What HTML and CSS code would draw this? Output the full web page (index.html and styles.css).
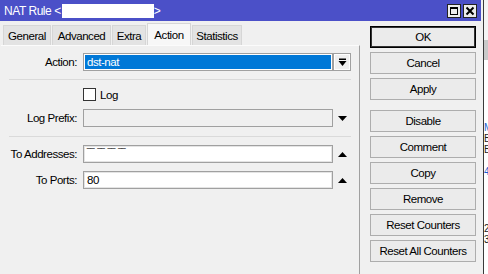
FILE: index.html
```html
<!DOCTYPE html>
<html>
<head>
<meta charset="utf-8">
<link rel="stylesheet" href="styles.css">
</head>
<body>
<div class="screen">
  <div class="window">
    <div class="titlebar">
      <span class="title">NAT Rule &lt;</span><span class="redact"></span><span class="title">&gt;</span>
      <div class="tbtns">
        <span class="tbtn"><svg width="12" height="12" viewBox="0 0 12 12"><rect x="2.5" y="2.5" width="7" height="7" fill="none" stroke="#000" stroke-width="1"/><rect x="2" y="2" width="8" height="2" fill="#000"/></svg></span>
        <span class="tbtn"><svg width="12" height="12" viewBox="0 0 12 12"><path d="M2.5 2.5 L9.5 9.5 M9.5 2.5 L2.5 9.5" stroke="#000" stroke-width="2" fill="none"/></svg></span>
      </div>
    </div>
    <div class="main">
      <div class="left">
        <div class="tabs">
          <div class="tab w-general">General</div>
          <div class="tab w-advanced">Advanced</div>
          <div class="tab w-extra">Extra</div>
          <div class="tab active w-action">Action</div>
          <div class="tab w-stats">Statistics</div>
        </div>
        <div class="panel">
          <div class="row">
            <div class="label">Action:</div>
            <div class="field sel">dst-nat</div>
            <div class="aux dd"><svg width="9" height="9" viewBox="0 0 9 9"><rect x="1" y="0.5" width="7" height="1.5" fill="#000"/><polygon points="0.5,3 8.5,3 4.5,8" fill="#000"/></svg></div>
          </div>
          <div class="sep s1"></div>
          <div class="row chk">
            <span class="box"></span><span class="chklabel">Log</span>
          </div>
          <div class="row r-prefix">
            <div class="label">Log Prefix:</div>
            <div class="field disabled"></div>
            <div class="aux"><svg width="9" height="5" viewBox="0 0 9 5"><polygon points="0,0 9,0 4.5,5" fill="#000"/></svg></div>
          </div>
          <div class="sep s2"></div>
          <div class="row r-addr">
            <div class="label">To Addresses:</div>
            <div class="field addr"><span class="masked">‾‾ ‾‾ ‾‾ ‾‾</span></div>
            <div class="aux"><svg width="9" height="5" viewBox="0 0 9 5"><polygon points="0,5 9,5 4.5,0" fill="#000"/></svg></div>
          </div>
          <div class="row r-ports">
            <div class="label">To Ports:</div>
            <div class="field">80</div>
            <div class="aux"><svg width="9" height="5" viewBox="0 0 9 5"><polygon points="0,5 9,5 4.5,0" fill="#000"/></svg></div>
          </div>
        </div>
      </div>
      <div class="buttons">
        <div class="btn default">OK</div>
        <div class="btn">Cancel</div>
        <div class="btn">Apply</div>
        <div class="btn spaced">Disable</div>
        <div class="btn">Comment</div>
        <div class="btn">Copy</div>
        <div class="btn">Remove</div>
        <div class="btn">Reset Counters</div>
        <div class="btn">Reset All Counters</div>
      </div>
    </div>
  </div>
  <div class="edge"></div>
  <div class="vline"></div>
  <div class="behind">
    <div class="bh-top"></div>
    <div class="bh-scroll"></div>
    <div class="bh-gap1"></div>
    <div class="g blue">M</div>
    <div class="g">B</div>
    <div class="g">B</div>
    <div class="bh-gap2"></div>
    <div class="g blue">4</div>
    <div class="bh-gap3"></div>
    <div class="g">2</div>
    <div class="g">3</div>
  </div>
</div>
</body>
</html>
```
FILE: styles.css
```css
html, body {
  margin: 0;
  padding: 0;
}
body {
  width: 488px;
  height: 274px;
  overflow: hidden;
  background: #f0f0f0;
  font-family: "Liberation Sans", Arial, sans-serif;
  font-size: 11.5px;
  letter-spacing: -0.45px;
  color: #000;
}
.screen {
  display: flex;
  height: 274px;
}
.window {
  width: 481px;
  display: flex;
  flex-direction: column;
  background: #f0f0f0;
}
.titlebar {
  height: 21px;
  background: #4b50c8;
  display: flex;
  align-items: center;
  color: #fff;
  padding-left: 4px;
}
.title {
  white-space: pre;
  font-size: 12px;
}
.redact {
  width: 92px;
  height: 14px;
  background: #fff;
  margin-left: 1px;
}
.tbtns {
  margin-left: auto;
  margin-right: 4px;
  display: flex;
  gap: 2px;
}
.tbtn {
  width: 14px;
  height: 14px;
  box-sizing: border-box;
  border: 1px solid #222;
  background: #ececec;
  display: flex;
  align-items: center;
  justify-content: center;
}
.main {
  display: flex;
  flex: 1;
}
.left {
  width: 360px;
  padding-left: 1px;
  box-sizing: border-box;
  display: flex;
  flex-direction: column;
}
.tabs {
  height: 24px;
  display: flex;
  align-items: flex-end;
  padding-left: 2px;
}
.tab {
  height: 20px;
  box-sizing: border-box;
  background: #e3e3e3;
  border: 1px solid #d6d6d6;
  border-bottom: none;
  display: flex;
  align-items: center;
  justify-content: center;
  margin-right: 1px;
  white-space: nowrap;
}
.tab.active {
  height: 22px;
  background: #f7f7f7;
}
.w-general { width: 48px; }
.w-advanced { width: 59px; }
.w-extra { width: 34px; }
.w-action { width: 44px; }
.w-stats { width: 50px; }
.panel {
  flex: 1;
  background: #f0f0f0;
  border-top: 1px solid #fbfbfb;
  border-right: 1px solid #a0a0a0;
  padding-top: 7px;
}
.row {
  display: flex;
  align-items: center;
  height: 18px;
}
.label {
  width: 82px;
  box-sizing: border-box;
  padding-right: 6px;
  text-align: right;
  white-space: nowrap;
}
.field {
  width: 250px;
  height: 18px;
  box-sizing: border-box;
  border: 1px solid #a0a0a0;
  box-shadow: inset 0 0 0 1px #e4e4e4;
  background: #fff;
  display: flex;
  align-items: center;
  padding-left: 3px;
}
.field.sel {
  background: #0078d7;
  box-shadow: inset 0 0 0 1px #fff;
  color: #fff;
}
.field.disabled {
  background: #f0f0f0;
  box-shadow: none;
}
.field.addr {
  align-items: flex-start;
  padding-top: 2px;
}
.masked {
  line-height: 10px;
  font-size: 11px;
  letter-spacing: 0;
  color: #222;
}
.aux {
  width: 18px;
  height: 18px;
  box-sizing: border-box;
  display: flex;
  align-items: center;
  justify-content: center;
}
.dd {
  border: 1px solid #a0a0a0;
  background: #f0f0f0;
  box-shadow: inset 0 0 0 1px #fff;
}
.sep {
  height: 1px;
  background: #dadada;
  margin-left: 8px;
  width: 342px;
}
.s1 { margin-top: 8px; }
.s2 { margin-top: 9px; }
.chk {
  height: 13px;
  margin-top: 8px;
  padding-left: 82px;
}
.box {
  width: 13px;
  height: 13px;
  box-sizing: border-box;
  border: 1px solid #333;
  background: #fff;
}
.chklabel {
  margin-left: 4px;
}
.r-prefix { margin-top: 8px; }
.r-addr { margin-top: 8px; }
.r-ports { margin-top: 8px; }
.buttons {
  margin-left: 10px;
  padding-top: 5px;
  display: flex;
  flex-direction: column;
  gap: 4px;
}
.btn {
  width: 106px;
  height: 22px;
  box-sizing: border-box;
  border: 1px solid #adadad;
  background: #ebebeb;
  display: flex;
  align-items: center;
  justify-content: center;
  white-space: nowrap;
}
.btn.default {
  border: 1px solid #000;
  box-shadow: inset 0 0 0 1px #333;
}
.btn.spaced {
  margin-top: 6px;
}
.edge {
  width: 2px;
  background: #f0f0f0;
}
.vline {
  width: 1px;
  background: #3a3a3a;
}
.behind {
  width: 4px;
  background: #fff;
  overflow: hidden;
  display: flex;
  flex-direction: column;
  font-size: 10px;
  letter-spacing: 0;
}
.bh-top { height: 40px; background: #f4f4f4; }
.bh-scroll { height: 20px; background: #c9c9c9; }
.bh-gap1 { height: 62px; }
.bh-gap2 { height: 11px; }
.bh-gap3 { height: 46px; }
.g {
  height: 11px;
  line-height: 11px;
  white-space: nowrap;
  color: #222;
}
.g.blue { color: #1a5fd0; }
```
